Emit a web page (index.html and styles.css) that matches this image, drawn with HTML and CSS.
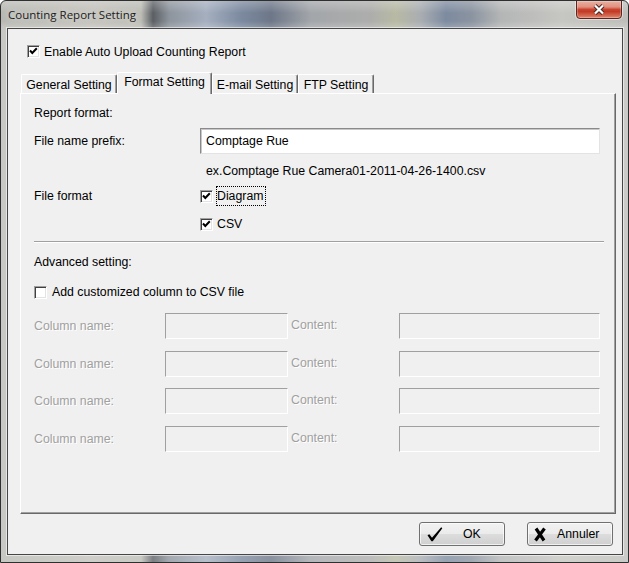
FILE: index.html
```html
<!DOCTYPE html>
<html lang="en">
<head>
<meta charset="UTF-8" />
<title>Counting Report Setting</title>
<link rel="stylesheet" href="styles.css">
</head>
<body>
  <div class="window">
    <div class="titlebar">
      <span class="title">Counting Report Setting</span>
      <button type="button" class="close" aria-label="Close">
        <svg width="14" height="11" viewBox="0 0 14 11">
          <path d="M3 1.5 L11 9.5 M11 1.5 L3 9.5" stroke="#4a2a26" stroke-width="4.2" fill="none"/>
          <path d="M3 1.5 L11 9.5 M11 1.5 L3 9.5" stroke="#fff" stroke-width="2.2" fill="none"/>
        </svg>
      </button>
    </div>

    <div class="client">
      <div class="check-row top-check">
        <span class="cb"><svg width="11" height="11" viewBox="0 0 11 11"><path d="M2 4.5 L4.3 7 L8.8 2.3" stroke="#000" stroke-width="2" fill="none"/></svg></span>
        <span>Enable Auto Upload Counting Report</span>
      </div>

      <div class="tabs">
        <div class="tab tab-general">General Setting</div>
        <div class="tab tab-format active">Format Setting</div>
        <div class="tab tab-email">E-mail Setting</div>
        <div class="tab tab-ftp">FTP Setting</div>
      </div>

      <div class="panel">
        <div class="row r-heading">Report format:</div>

        <div class="row r-prefix">
          <span class="label">File name prefix:</span>
          <div class="text-input">Comptage Rue</div>
        </div>

        <div class="row hint">ex.Comptage Rue Camera01-2011-04-26-1400.csv</div>

        <div class="row r-format">
          <span class="label">File format</span>
          <span class="cb"><svg width="11" height="11" viewBox="0 0 11 11"><path d="M2 4.5 L4.3 7 L8.8 2.3" stroke="#000" stroke-width="2" fill="none"/></svg></span>
          <span class="focus">Diagram</span>
        </div>

        <div class="row r-csv">
          <span class="cb"><svg width="11" height="11" viewBox="0 0 11 11"><path d="M2 4.5 L4.3 7 L8.8 2.3" stroke="#000" stroke-width="2" fill="none"/></svg></span>
          <span class="cb-text">CSV</span>
        </div>

        <div class="sep"></div>

        <div class="row r-adv">Advanced setting:</div>

        <div class="row r-add">
          <span class="cb"></span>
          <span class="cb-text wide">Add customized column to CSV file</span>
        </div>

        <div class="cols">
          <span class="dis">Column name:</span>
          <div class="dis-box"></div>
          <span class="dis content">Content:</span>
          <div class="dis-box"></div>

          <span class="dis">Column name:</span>
          <div class="dis-box"></div>
          <span class="dis content">Content:</span>
          <div class="dis-box"></div>

          <span class="dis">Column name:</span>
          <div class="dis-box"></div>
          <span class="dis content">Content:</span>
          <div class="dis-box"></div>

          <span class="dis">Column name:</span>
          <div class="dis-box"></div>
          <span class="dis content">Content:</span>
          <div class="dis-box"></div>
        </div>
      </div>

      <div class="footer">
        <button type="button" class="btn btn-ok">
          <svg width="16" height="15" viewBox="0 0 16 15"><path d="M0.5 8.2 L2.3 7.2 L5 10.8 L14.2 0.3 L15.3 1.2 L5.8 14.2 L4.4 14.2 Z" fill="#000"/></svg>
          <span>OK</span>
        </button>
        <button type="button" class="btn btn-cancel">
          <svg width="12" height="15" viewBox="0 0 12 15"><path d="M2 1.5 L10 13.5 M10.5 1.5 L1.5 13.5" stroke="#000" stroke-width="3.2" fill="none"/></svg>
          <span>Annuler</span>
        </button>
      </div>
    </div>
  </div>
</body>
</html>
```

FILE: styles.css
```css
* {
  box-sizing: border-box;
}

body {
  margin: 0;
  font-family: "Liberation Sans", Arial, sans-serif;
  font-size: 12.3px;
  color: #000;
}

/* window frame (aero glass look) */
.window {
  width: 629px;
  height: 563px;
  border: 1px solid #2f2f2f;
  border-radius: 6px 6px 0 0;
  overflow: hidden;
  display: flex;
  flex-direction: column;
  background:
    linear-gradient(180deg, rgba(255,255,255,0.25), rgba(255,255,255,0) 12px, rgba(255,255,255,0) 20px, rgba(255,255,255,0.2) 27px),
    linear-gradient(90deg, #b9b9b4 0, #c3c2bc 90px, #bdbdb6 140px, #5b5f64 152px, #8d949c 168px,
      #a5afbf 205px, #7c8aa0 240px, #6d7788 270px, #a3a6aa 310px, #adaeac 370px, #b8baa4 395px,
      #a9adb2 420px, #7d8ba0 445px, #8a93a0 470px, #b4b6b6 500px, #c6c6c2 560px, #bdbdba 629px);
}

.titlebar {
  height: 27px;
  display: flex;
  justify-content: space-between;
  flex-shrink: 0;
}

.title {
  align-self: center;
  padding-left: 7px;
  font-family: "Open Sans", "Noto Sans", sans-serif;
  font-size: 11.5px;
  color: #1b1b1b;
  text-shadow: 0 0 6px rgba(255,255,255,0.8);
}

.close {
  width: 46px;
  height: 19px;
  margin: -1px 6px 0 0;
  padding: 0;
  border: 1px solid #5a2522;
  border-radius: 0 0 4px 4px;
  background: linear-gradient(180deg, #eab0a2 0%, #e0917f 35%, #c9432e 50%, #c23b27 62%, #d4674e 85%, #e08a72 100%);
  box-shadow: 0 0 0 1px rgba(255,255,255,0.45), inset 0 0 0 1px rgba(255,255,255,0.25);
  display: flex;
  align-items: center;
  justify-content: center;
}

/* dialog body */
.client {
  margin: 0 5px 0 6px;
  height: 527px;
  border: 1px solid #464646;
  background: #f0f0f0;
  box-shadow: 0 0 0 1px rgba(255,255,255,0.55);
  flex-shrink: 0;
}

.cb {
  width: 13px;
  height: 13px;
  flex-shrink: 0;
  background: #fff;
  border: 1px solid;
  border-color: #a0a0a0 #fff #fff #a0a0a0;
  box-shadow: inset 1px 1px 0 #404040, inset -1px -1px 0 #e3e3e3;
  display: flex;
  align-items: center;
  justify-content: center;
}

.cb svg {
  margin: 0 0 0 0;
}

.check-row {
  display: flex;
  align-items: center;
}

.top-check {
  height: 13px;
  margin: 16px 0 0 19px;
  gap: 4px;
}

/* tabs */
.tabs {
  display: flex;
  align-items: flex-end;
  height: 21px;
  margin: 14px 0 0 12px;
  padding-left: 1px;
}

.tab {
  height: 19px;
  padding-top: 1px;
  display: flex;
  align-items: center;
  justify-content: center;
  background: #f0f0f0;
  border-top: 1px solid #fff;
  border-left: 1px solid #fff;
  border-right: 1px solid #696969;
  border-radius: 2px 2px 0 0;
  box-shadow: inset -1px 0 0 #a0a0a0;
}

.tab.active {
  height: 22px;
  margin-bottom: -1px;
  padding: 0 0 3px 0;
  position: relative;
  z-index: 1;
}

.tab-general { width: 96px; }
.tab-format { width: 95px; }
.tab-email { width: 86px; }
.tab-ftp { width: 76px; }

.panel {
  width: 596px;
  height: 421px;
  margin-left: 12px;
  padding: 6px 0 0 13px;
  border-top: 1px solid #fff;
  border-left: 1px solid #fff;
  border-right: 1px solid #696969;
  border-bottom: 1px solid #696969;
  box-shadow: inset -1px -1px 0 #a0a0a0;
}

.row {
  display: flex;
  align-items: center;
}

.label {
  width: 166px;
  flex-shrink: 0;
}

.r-heading {
  height: 26px;
}

.r-prefix {
  height: 26px;
  margin-top: 2px;
}

.text-input {
  width: 400px;
  height: 26px;
  padding-left: 5px;
  display: flex;
  align-items: center;
  background: #fff;
  border: 1px solid;
  border-color: #8a8a8a #e3e3e3 #e3e3e3 #8a8a8a;
  box-shadow: inset 1px 1px 0 #c8c8c8;
}

.hint {
  height: 26px;
  margin-top: 4px;
  padding-left: 172px;
}

.r-format {
  height: 20px;
  margin-top: 2px;
}

.focus {
  height: 20px;
  margin-left: 3px;
  padding-right: 2px;
  border: 1px dotted #000;
  display: flex;
  align-items: center;
}

.r-csv {
  height: 20px;
  margin-top: 8px;
  padding-left: 166px;
}

.cb-text {
  margin-left: 4px;
}

.cb-text.wide {
  margin-left: 5px;
}

.sep {
  width: 570px;
  height: 2px;
  margin-top: 7px;
  border-top: 1px solid #a0a0a0;
  border-bottom: 1px solid #fff;
}

.r-adv {
  height: 20px;
  margin-top: 9px;
}

.r-add {
  height: 20px;
  margin-top: 10px;
}

/* disabled custom columns */
.cols {
  margin-top: 11px;
  display: grid;
  grid-template-columns: 131px 123px 111px 201px;
  grid-auto-rows: 26px;
  row-gap: 11.5px;
}

.dis {
  color: #a0a0a0;
  text-shadow: 1px 1px 0 #fff;
  display: flex;
  align-items: center;
}

.dis.content {
  padding: 0 0 2px 3px;
}

.dis-box {
  border: 1px solid;
  border-color: #a0a0a0 #fff #fff #a0a0a0;
  background: #f0f0f0;
}

/* bottom buttons */
.footer {
  display: flex;
  justify-content: flex-end;
  gap: 22px;
  margin-top: 8px;
  padding-right: 9px;
}

.btn {
  width: 86px;
  height: 24px;
  padding: 0 0 0 7px;
  display: flex;
  align-items: center;
  font-family: inherit;
  font-size: inherit;
  color: #000;
  border: 1px solid #707070;
  border-radius: 3px;
  background: linear-gradient(180deg, #f2f2f2 0%, #ebebeb 50%, #dddddd 50%, #cfcfcf 100%);
  box-shadow: inset 0 0 0 1px rgba(255,255,255,0.7);
}

.btn-ok span {
  margin-left: 20px;
}

.btn-cancel {
  padding-left: 6px;
}

.btn-cancel span {
  margin-left: 11px;
}
```
